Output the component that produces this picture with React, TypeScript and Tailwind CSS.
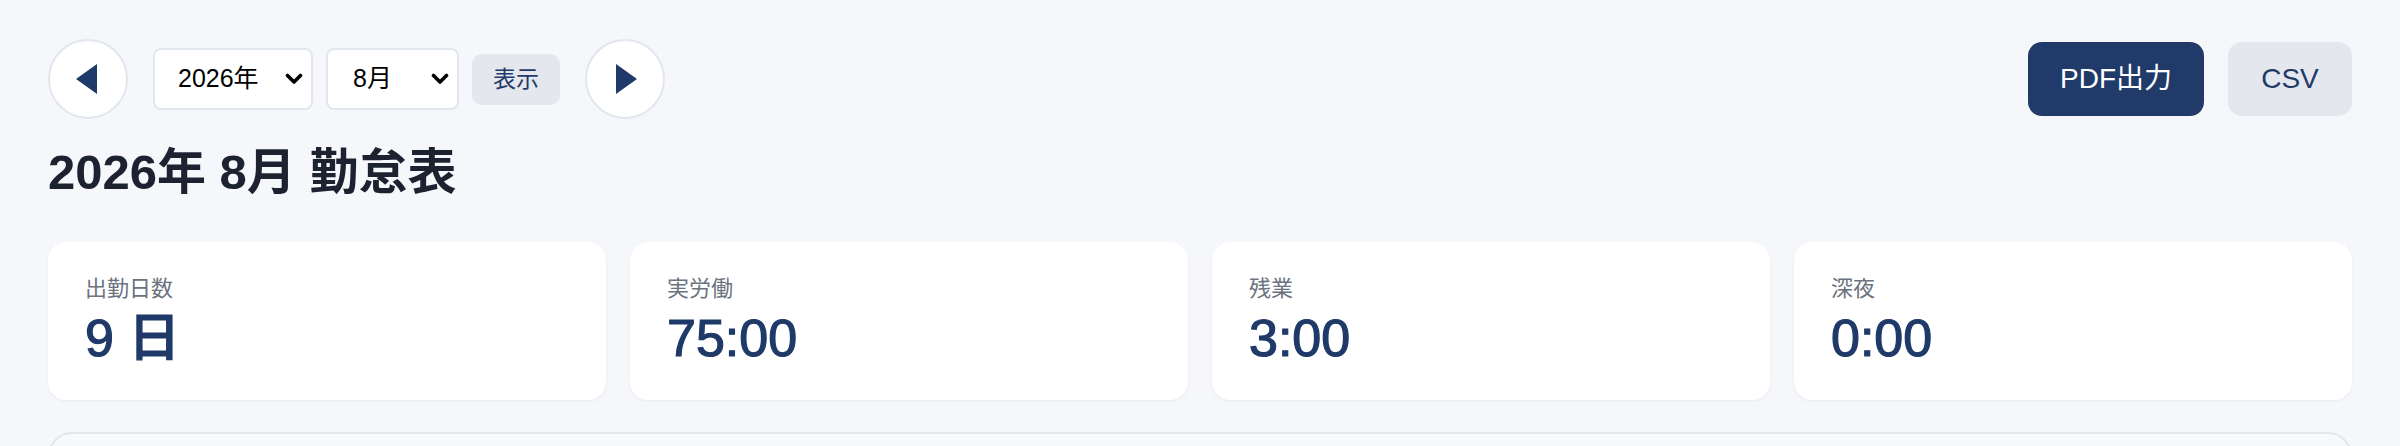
import React, { useState } from 'react';

const font = { fontFamily: '"Liberation Sans", "Noto Sans CJK JP", sans-serif' };

interface Stat {
  label: string;
  value: string;
}

const stats: Stat[] = [
  { label: '出勤日数', value: '9 日' },
  { label: '実労働', value: '75:00' },
  { label: '残業', value: '3:00' },
  { label: '深夜', value: '0:00' },
];

const Chevron: React.FC = () => (
  <svg width="18" height="12" viewBox="0 0 18 12" className="pointer-events-none absolute right-[10px] top-1/2 -translate-y-1/2">
    <path d="M2.5 2.5 L9 9 L15.5 2.5" fill="none" stroke="#000" strokeWidth="3.6" strokeLinecap="round" strokeLinejoin="round" />
  </svg>
);

const NavButton: React.FC<{ dir: 'prev' | 'next' }> = ({ dir }) => (
  <button className="w-[80px] h-[80px] rounded-full bg-white border-2 border-[#e2e6ee] flex items-center justify-center">
    <svg width="21" height="30" viewBox="0 0 21 30" className={dir === 'next' ? 'ml-[3px]' : '-ml-[3px]'}>
      {dir === 'prev' ? (
        <polygon points="21,0 0,15 21,30" fill="#1f3a68" />
      ) : (
        <polygon points="0,0 21,15 0,30" fill="#1f3a68" />
      )}
    </svg>
  </button>
);

const App: React.FC = () => {
  const [year, setYear] = useState('2026');
  const [month, setMonth] = useState('8');

  return (
    <div className="min-h-screen bg-[#f5f7fa] px-[48px] pt-[39px]" style={font}>
      <div className="flex items-center justify-between h-[80px]">
        <div className="flex items-center gap-[25px]">
          <NavButton dir="prev" />
          <div className="flex items-center gap-[13px]">
            <div className="relative">
              <select
                value={year}
                onChange={(e) => setYear(e.target.value)}
                className="appearance-none w-[160px] h-[62px] rounded-[8px] border-2 border-[#e2e6ee] bg-white pl-[23px] text-[25px] text-black outline-none"
              >
                <option value="2025">2025年</option>
                <option value="2026">2026年</option>
                <option value="2027">2027年</option>
              </select>
              <Chevron />
            </div>
            <div className="relative">
              <select
                value={month}
                onChange={(e) => setMonth(e.target.value)}
                className="appearance-none w-[133px] h-[62px] rounded-[8px] border-2 border-[#e2e6ee] bg-white pl-[25px] text-[25px] text-black outline-none"
              >
                {Array.from({ length: 12 }, (_, i) => (
                  <option key={i} value={String(i + 1)}>{i + 1}月</option>
                ))}
              </select>
              <Chevron />
            </div>
            <button className="h-[51px] w-[88px] rounded-[10px] bg-[#e4e7ee] text-[23px] text-[#1f3a68]">
              表示
            </button>
          </div>
          <NavButton dir="next" />
        </div>
        <div className="flex items-center gap-[24px]">
          <button className="h-[74px] w-[176px] rounded-[14px] bg-[#203a6a] text-white text-[28px]">
            PDF出力
          </button>
          <button className="h-[74px] w-[124px] rounded-[14px] bg-[#e4e7ee] text-[#1f3a68] text-[28px]">
            CSV
          </button>
        </div>
      </div>

      <h1 className="mt-[29px] text-[49px] leading-none font-bold text-[#1c2230]">
        2026年 8月 勤怠表
      </h1>

      <div className="mt-[45px] grid grid-cols-4 gap-[24px]">
        {stats.map((s) => (
          <div key={s.label} className="h-[158px] rounded-[18px] bg-white shadow-[0_1px_3px_rgba(0,0,0,0.06)] px-[37px] pt-[30px]">
            <div className="text-[22px] leading-[33px] text-[#6b7280]">{s.label}</div>
            <div className="mt-[7px] text-[52px] leading-none font-medium text-[#1f3a68] [-webkit-text-stroke:1.2px_#1f3a68]">{s.value}</div>
          </div>
        ))}
      </div>

      <div className="mt-[32px] h-[200px] rounded-[24px] border-2 border-[#e3e6ec] bg-[#f8f9fc]" />
    </div>
  );
};

export default App;
